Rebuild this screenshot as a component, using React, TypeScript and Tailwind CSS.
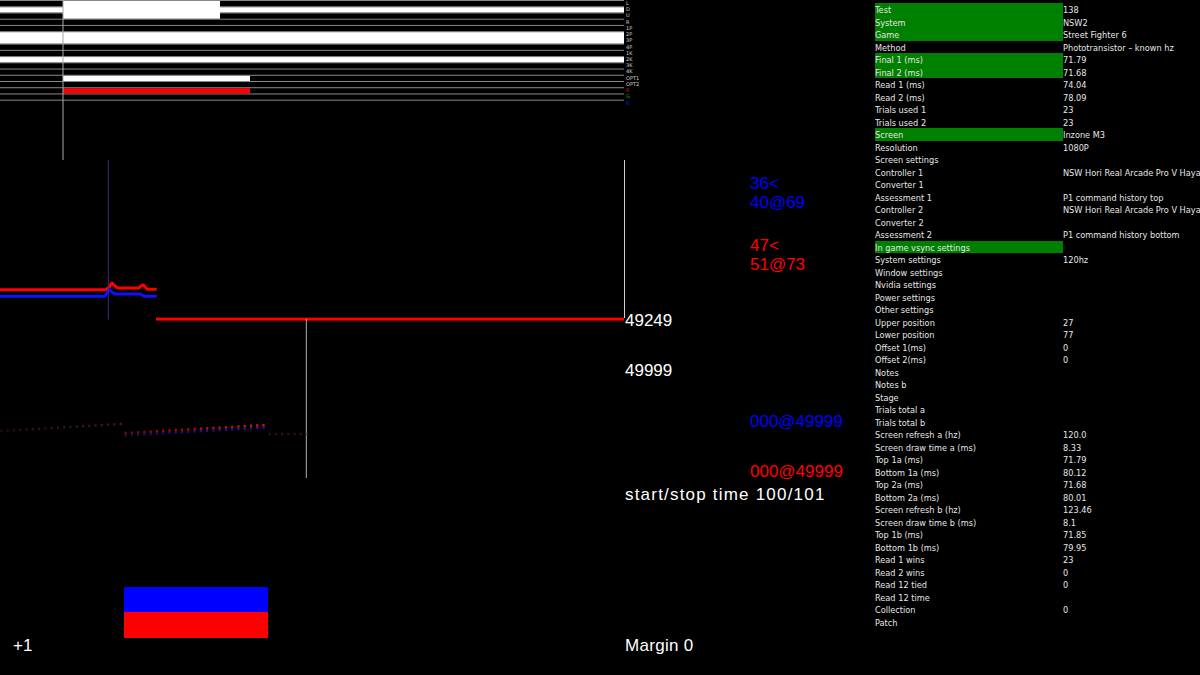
import React from "react";

const ROW = 6.23;

const barLabels: { t: string; c: string }[] = [
  { t: "L", c: "text-[#d0d0d0]" },
  { t: "D", c: "text-[#d0d0d0]" },
  { t: "U", c: "text-[#d0d0d0]" },
  { t: "R", c: "text-[#d0d0d0]" },
  { t: "1P", c: "text-[#d0d0d0]" },
  { t: "2P", c: "text-[#d0d0d0]" },
  { t: "3P", c: "text-[#d0d0d0]" },
  { t: "4P", c: "text-[#d0d0d0]" },
  { t: "1K", c: "text-[#d0d0d0]" },
  { t: "2K", c: "text-[#d0d0d0]" },
  { t: "3K", c: "text-[#d0d0d0]" },
  { t: "4K", c: "text-[#d0d0d0]" },
  { t: "OPT1", c: "text-[#d0d0d0]" },
  { t: "OPT2", c: "text-[#d0d0d0]" },
  { t: "R", c: "text-[#c01010]" },
  { t: "G", c: "text-[#10a010]" },
  { t: "B", c: "text-[#1010d0]" },
];

const table: { k: string; v: string; g?: boolean }[] = [
  { k: "Test", v: "138", g: true },
  { k: "System", v: "NSW2", g: true },
  { k: "Game", v: "Street Fighter 6", g: true },
  { k: "Method", v: "Phototransistor \u2013 known hz" },
  { k: "Final 1 (ms)", v: "71.79", g: true },
  { k: "Final 2 (ms)", v: "71.68", g: true },
  { k: "Read 1 (ms)", v: "74.04" },
  { k: "Read 2 (ms)", v: "78.09" },
  { k: "Trials used 1", v: "23" },
  { k: "Trials used 2", v: "23" },
  { k: "Screen", v: "Inzone M3", g: true },
  { k: "Resolution", v: "1080P" },
  { k: "Screen settings", v: "" },
  { k: "Controller 1", v: "NSW Hori Real Arcade Pro V Hayabusa" },
  { k: "Converter 1", v: "" },
  { k: "Assessment 1", v: "P1 command history top" },
  { k: "Controller 2", v: "NSW Hori Real Arcade Pro V Hayabusa" },
  { k: "Converter 2", v: "" },
  { k: "Assessment 2", v: "P1 command history bottom" },
  { k: "In game vsync settings", v: "", g: true },
  { k: "System settings", v: "120hz" },
  { k: "Window settings", v: "" },
  { k: "Nvidia settings", v: "" },
  { k: "Power settings", v: "" },
  { k: "Other settings", v: "" },
  { k: "Upper position", v: "27" },
  { k: "Lower position", v: "77" },
  { k: "Offset 1(ms)", v: "0" },
  { k: "Offset 2(ms)", v: "0" },
  { k: "Notes", v: "" },
  { k: "Notes b", v: "" },
  { k: "Stage", v: "" },
  { k: "Trials total a", v: "" },
  { k: "Trials total b", v: "" },
  { k: "Screen refresh a (hz)", v: "120.0" },
  { k: "Screen draw time a (ms)", v: "8.33" },
  { k: "Top 1a (ms)", v: "71.79" },
  { k: "Bottom 1a (ms)", v: "80.12" },
  { k: "Top 2a (ms)", v: "71.68" },
  { k: "Bottom 2a (ms)", v: "80.01" },
  { k: "Screen refresh b (hz)", v: "123.46" },
  { k: "Screen draw time b (ms)", v: "8.1" },
  { k: "Top 1b (ms)", v: "71.85" },
  { k: "Bottom 1b (ms)", v: "79.95" },
  { k: "Read 1 wins", v: "23" },
  { k: "Read 2 wins", v: "0" },
  { k: "Read 12 tied", v: "0" },
  { k: "Read 12 time", v: "" },
  { k: "Collection", v: "0" },
  { k: "Patch", v: "" },
];

function BarsChart() {
  const lines = [];
  for (let i = 0; i < 17; i++) {
    lines.push(<rect key={i} x={0} y={ROW * i} width={624} height={1} fill="#888888" />);
  }
  const rowRect = (i: number, x1: number, x2: number, fill: string, span = 1) => (
    <rect key={`r${i}-${x1}`} x={x1} y={ROW * i + 1} width={x2 - x1} height={ROW * span - 1} fill={fill} />
  );
  return (
    <svg width={625} height={106} className="block shrink-0">
      <rect x={0} y={0} width={625} height={106} fill="#000" />
      {lines}
      {rowRect(0, 63, 220, "#fff", 3)}
      {rowRect(1, 0, 624, "#fff")}
      {rowRect(5, 0, 624, "#fff", 2)}
      {rowRect(9, 0, 624, "#fff")}
      {rowRect(12, 63, 250, "#fff")}
      {rowRect(14, 63, 250, "#ff0000")}
      <rect x={62.5} y={0} width={1} height={106} fill="#a8a8a8" />
    </svg>
  );
}

function GraphChart() {
  const dots: React.ReactNode[] = [];
  for (let k = 0; k < 20; k++) {
    const x = 0.5 + 6.27 * k;
    const y = 431 - (7 / 119) * x;
    dots.push(
      <rect key={`a${k}`} x={x} y={y - 1.2} width={2} height={2.4} fill="#5a2020" opacity={0.45 + 0.4 * (k / 19)} />
    );
  }
  for (let k = 0; k < 23; k++) {
    const x = 124.5 + 6.27 * k;
    const y = 433.3 - (8 / 138) * (x - 124.5);
    const f = k / 22;
    dots.push(
      <rect key={`b${k}`} x={x} y={y - 1.5} width={2.2} height={2.6} fill="#e01010" opacity={0.55 + 0.45 * f} />
    );
    dots.push(
      <rect key={`c${k}`} x={x} y={y + 1.2} width={2.2} height={2.2} fill="#2020e0" opacity={0.45 + 0.4 * f} />
    );
  }
  for (let k = 0; k < 7; k++) {
    const x = 268.5 + 6.27 * k;
    dots.push(<rect key={`d${k}`} x={x} y={432.8} width={2} height={2.4} fill="#5a2020" opacity={0.6} />);
  }
  return (
    <svg width={625} height={374} viewBox="0 106 625 374" className="block shrink-0">
      <rect x={62.5} y={106} width={1} height={54} fill="#a8a8a8" />
      <rect x={624} y={160} width={1} height={158} fill="#d0d0d0" />
      <path
        d="M0 289.7 L106 289.7 L109 287 L112 283 L115 286 L117.5 288 L139 288 L141 286 L143.3 284.7 L145.5 287.5 L147.5 289.3 L156.7 289.3"
        stroke="#ff0000"
        strokeWidth={3}
        fill="none"
        strokeLinejoin="round"
      />
      <path
        d="M0 296.3 L105 296.3 L107 293 L109.3 289.5 L112 292 L115 294 L140 294 L143 295.5 L145.3 296.3 L156.7 296.3"
        stroke="#1010ff"
        strokeWidth={3}
        fill="none"
        strokeLinejoin="round"
      />
      <rect x={107.8} y={160} width={1} height={159.5} fill="#3a2a90" />
      <rect x={156} y={317.6} width={468} height={3} fill="#ff0000" />
      <rect x={305.8} y={319} width={1} height={159} fill="#b0b0b0" />
      {dots}
    </svg>
  );
}

export default function App() {
  const big = "font-['Liberation_Sans',Arial,sans-serif] text-[17px] leading-[17px] whitespace-nowrap";
  return (
    <div className="w-[1200px] h-[675px] bg-black flex overflow-hidden">
      <div className="w-[875px] shrink-0 flex flex-col">
        <div className="flex h-[106px]">
          <BarsChart />
          <div className="flex flex-col pl-[1px] font-['DejaVu_Sans',sans-serif]">
            {barLabels.map((l, i) => (
              <div key={i} className={`h-[6.23px] text-[5px] leading-[6.23px] whitespace-nowrap ${l.c}`}>
                {l.t}
              </div>
            ))}
          </div>
        </div>
        <div className="flex">
          <div className="w-[625px] shrink-0 flex flex-col">
            <GraphChart />
            <div className="ml-[124px] mt-[107px] w-[144px] h-[25px] bg-[#0000ff]" />
            <div className="ml-[124px] w-[144px] h-[26px] bg-[#ff0000]" />
            <div className={`${big} text-white pl-[13px] mt-[-1.4px]`}>+1</div>
          </div>
          <div className="flex flex-col">
            <div className={`${big} text-[#0000ff] ml-[125px] mt-[68.6px]`}>36&lt;</div>
            <div className={`${big} text-[#0000ff] ml-[125px] mt-[2px]`}>40@69</div>
            <div className={`${big} text-[#ff0000] ml-[125px] mt-[26px]`}>47&lt;</div>
            <div className={`${big} text-[#ff0000] ml-[125px] mt-[2px]`}>51@73</div>
            <div className={`${big} text-white mt-[39px]`}>49249</div>
            <div className={`${big} text-white mt-[33px]`}>49999</div>
            <div className={`${big} text-[#0000ff] ml-[125px] mt-[34px]`}>000@49999</div>
            <div className={`${big} text-[#ff0000] ml-[125px] mt-[33px]`}>000@49999</div>
            <div className={`${big} text-white mt-[6.7px] tracking-[1.2px]`}>start/stop time 100/101</div>
            <div className={`${big} text-white mt-[133.7px] tracking-[0.3px]`}>Margin 0</div>
          </div>
        </div>
      </div>
      <div className="w-[325px] shrink-0 pt-[3.3px] font-['DejaVu_Sans',sans-serif] text-[8.2px] text-[#e6e6e6] overflow-hidden">
        {table.map((r, i) => (
          <div key={i} className="grid grid-cols-[188px_1fr] h-[12.5px] leading-[14px]">
            <div className={`whitespace-nowrap overflow-hidden ${r.g ? "bg-[#008000]" : ""}`}>{r.k}</div>
            <div className="whitespace-nowrap overflow-hidden">{r.v}</div>
          </div>
        ))}
      </div>
    </div>
  );
}
